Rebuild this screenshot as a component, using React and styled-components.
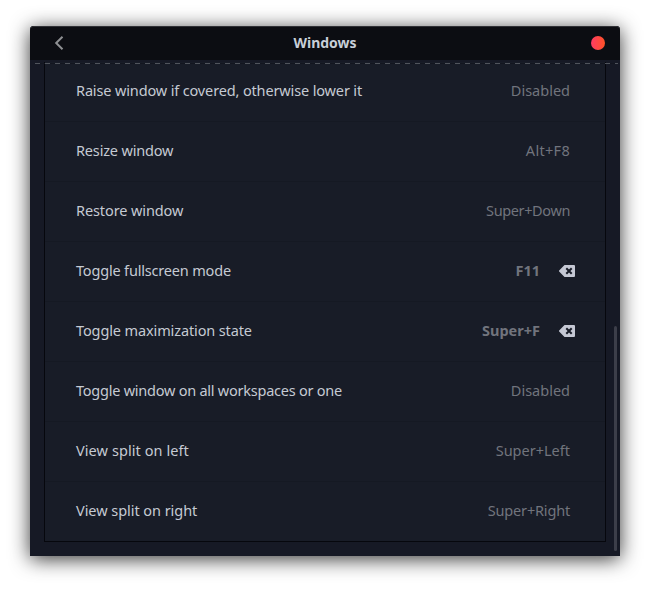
import React from 'react';
import styled, { createGlobalStyle } from 'styled-components';

const GlobalStyle = createGlobalStyle`
  * { box-sizing: border-box; }
  body { margin: 0; background: #fff; font-family: 'Noto Sans', 'Open Sans', sans-serif; }
`;
const Desktop = styled.main`
  width: 650px; height: 590px; padding: 26px 30px 34px; overflow: hidden; background: #fff;
`;
const Window = styled.section`
  width: 590px; height: 530px; display: flex; flex-direction: column;
  background: #161925; border-radius: 4px 4px 0 0;
  box-shadow: 0 3px 20px rgba(0,0,0,.8);
`;
const TitleBar = styled.header`
  height: 34px; flex: none; display: grid; grid-template-columns: 60px 1fr 60px; align-items: center;
  background: #0c0d12; color: #c8cfd8; border-radius: 4px 4px 0 0;
  box-shadow: inset 0 1px #303136;
`;
const Back = styled.button`
  display: flex; padding: 0 0 0 24px; border: 0; background: none; color: #8f9093;
`;
const Title = styled.h1`
  margin: 0; text-align: center; font-size: 14px; line-height: 34px; font-weight: 700; letter-spacing: -.05px;
`;
const Close = styled.button`
  width: 14px; height: 14px; margin-left: 31px; padding: 0; border: 0; border-radius: 50%;
  background: linear-gradient(90deg, #ff3c64, #ff5226);
`;
const Body = styled.div`
  position: relative; flex: 1; display: flex; padding-top: 2px;
`;
const Undershoot = styled.div`
  position: absolute; top: 3px; left: 5px; right: 2px; height: 1px;
  background: repeating-linear-gradient(90deg, #50545c 0 5px, #131620 5px 10px);
`;
const List = styled.ul`
  list-style: none; margin: 0 8px 14px 14px; padding: 0; flex: 1; height: 480px; background: #181c27;
  border: solid #06070d; border-width: 0 1px 1px;
`;
const Row = styled.li`
  height: 60px; display: flex; align-items: center; padding: 0 30px 0 31px;
  border-bottom: 1px solid #151923;
  &:last-child { border-bottom: 0; }
`;
const Label = styled.span`
  flex: 1; padding-bottom: 4px; font-size: 14.5px; line-height: 20px; color: #c5cad3; white-space: nowrap;
  letter-spacing: ${p => p.$tracking}px;
`;
const Shortcut = styled.span`
  padding-bottom: 4px; font-size: 14.5px; line-height: 20px; color: #71747d;
  font-weight: ${p => (p.$custom ? 700 : 400)};
  margin-right: ${p => (p.$custom ? 19 : 5)}px; letter-spacing: ${p => p.$tracking}px;
`;
const Reset = styled.button`
  display: flex; padding: 0 0 2px; border: 0; background: none; color: #c5c8d4;
`;
const Scrollbar = styled.div`
  width: 6px; padding-top: 264px;
`;
const Thumb = styled.div`
  width: 3px; height: 225px; border-radius: 2px; background: #3c3e49;
`;

const shortcuts = [
  { label: 'Raise window if covered, otherwise lower it', keys: 'Disabled', lt: -0.14, kt: 0 },
  { label: 'Resize window', keys: 'Alt+F8', lt: -0.17, kt: 0.3 },
  { label: 'Restore window', keys: 'Super+Down', lt: -0.1, kt: -0.38 },
  { label: 'Toggle fullscreen mode', keys: 'F11', custom: true, lt: -0.18, kt: 0 },
  { label: 'Toggle maximization state', keys: 'Super+F', custom: true, lt: -0.12, kt: 0 },
  { label: 'Toggle window on all workspaces or one', keys: 'Disabled', lt: -0.24, kt: 0 },
  { label: 'View split on left', keys: 'Super+Left', lt: 0.08, kt: 0 },
  { label: 'View split on right', keys: 'Super+Right', lt: -0.05, kt: -0.18 },
];

const BackIcon = () => (
  <svg width="10" height="14" viewBox="0 0 10 14" fill="none" stroke="currentColor" strokeWidth="2">
    <path d="M8.5 .8 2.2 7l6.3 6.2" />
  </svg>
);
const ClearIcon = () => (
  <svg width="16" height="12" viewBox="0 0 16 12">
    <path fill="currentColor" d="M5.5 0H15a1 1 0 0 1 1 1v10a1 1 0 0 1-1 1H5.5L.4 6.8a1.1 1.1 0 0 1 0-1.6Z" />
    <path stroke="#181c27" strokeWidth="2" d="m7.3 3.3 5.4 5.4m0-5.4L7.3 8.7" />
  </svg>
);

export default function App() {
  return (
    <>
      <GlobalStyle />
      <Desktop>
        <Window>
          <TitleBar>
            <Back aria-label="Back"><BackIcon /></Back>
            <Title>Windows</Title>
            <Close aria-label="Close" />
          </TitleBar>
          <Body>
            <List>
              {shortcuts.map(s => (
                <Row key={s.label}>
                  <Label $tracking={s.lt}>{s.label}</Label>
                  <Shortcut $custom={s.custom} $tracking={s.kt}>{s.keys}</Shortcut>
                  {s.custom && <Reset aria-label="Reset shortcut"><ClearIcon /></Reset>}
                </Row>
              ))}
            </List>
            <Scrollbar><Thumb /></Scrollbar>
            <Undershoot />
          </Body>
        </Window>
      </Desktop>
    </>
  );
}
